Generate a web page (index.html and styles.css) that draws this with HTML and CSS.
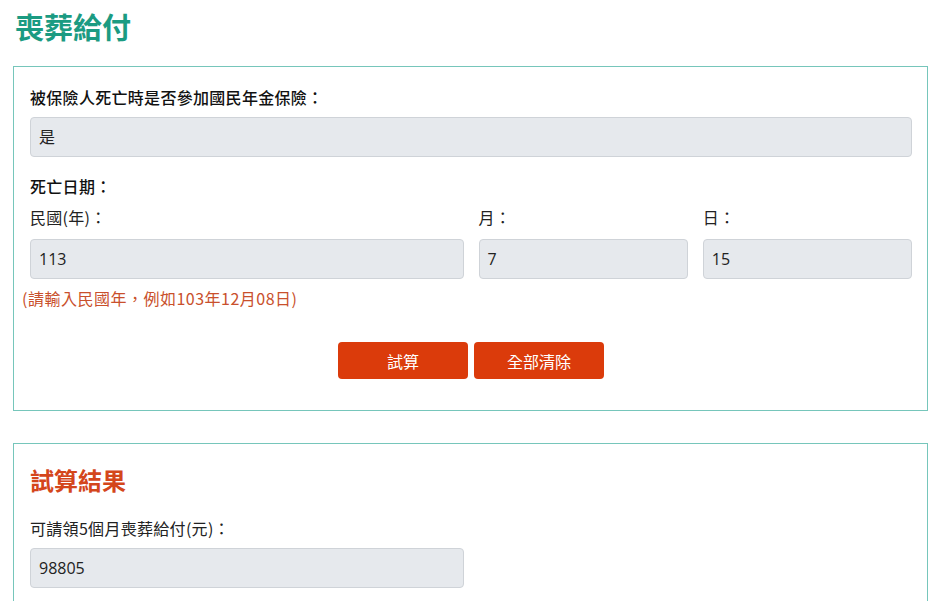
FILE: index.html
```html
<!DOCTYPE html>
<html lang="zh-Hant">
<head>
    <meta charset="UTF-8">
    <meta name="viewport" content="width=device-width, initial-scale=1.0">
    <title>喪葬給付</title>
    <link rel="stylesheet" href="styles.css">
</head>
<body>
    <h1 class="page-title">喪葬給付</h1>

    <div class="card">
        <label class="label strong">被保險人死亡時是否參加國民年金保險：</label>
        <div class="field">是</div>

        <div class="label strong date-title">死亡日期：</div>
        <div class="date-grid">
            <div class="col-year">
                <label class="label">民國(年)：</label>
                <div class="field">113</div>
            </div>
            <div>
                <label class="label">月：</label>
                <div class="field">7</div>
            </div>
            <div>
                <label class="label">日：</label>
                <div class="field">15</div>
            </div>
        </div>
        <p class="hint">(請輸入民國年，例如103年12月08日)</p>

        <div class="actions">
            <button class="btn">試算</button>
            <button class="btn">全部清除</button>
        </div>
    </div>

    <div class="card result">
        <h2 class="result-title">試算結果</h2>
        <label class="label">可請領5個月喪葬給付(元)：</label>
        <div class="date-grid">
            <div class="col-year">
                <div class="field">98805</div>
            </div>
        </div>
    </div>
</body>
</html>
```

FILE: styles.css
```css
body {
    margin: 0;
    padding: 0 13px;
    font-family: "Noto Sans CJK TC", "Noto Sans", sans-serif;
    font-size: 16px;
    color: #222;
    background: #fff;
}

.page-title {
    margin: 0;
    padding: 7px 0 0 2px;
    height: 66px;
    box-sizing: border-box;
    font-size: 29px;
    line-height: 38px;
    font-weight: 700;
    color: #1b9b82;
}

.card {
    border: 1px solid #76c6bb;
    padding: 16px 15px 31px 16px;
}

.label {
    display: block;
    line-height: 28px;
    margin-bottom: 6px;
    letter-spacing: 0.3px;
}
.strong { font-weight: 500; color: #111; }

.field {
    height: 40px;
    box-sizing: border-box;
    padding: 0 8px;
    line-height: 38px;
    background: #e6e9ed;
    border: 1px solid #cfd3d8;
    border-radius: 4px;
    font-family: "Open Sans", "Noto Sans CJK TC", sans-serif;
    font-size: 16px;
    color: #222;
}

.date-title { margin: 15px 0 3px; }

.date-grid {
    display: grid;
    grid-template-columns: repeat(4, 1fr);
    column-gap: 15px;
}
.date-grid .label { margin-bottom: 8px; }
.col-year { grid-column: span 2; }

.hint {
    margin: 5px 0 0 -8px;
    line-height: 28px;
    color: #c9502c;
    font-size: 16px;
    letter-spacing: 0.5px;
}

.actions {
    display: flex;
    justify-content: center;
    gap: 6px;
    margin-top: 30px;
}

.btn {
    width: 130px;
    height: 37px;
    border: none;
    border-radius: 4px;
    background: #db3b0b;
    color: #fff;
    font-family: "Noto Sans CJK TC", sans-serif;
    font-size: 16px;
    cursor: pointer;
}

.result {
    margin-top: 32px;
    padding-bottom: 40px;
}

.result-title {
    margin: 0 0 14px;
    font-size: 24px;
    line-height: 40px;
    font-weight: 700;
    color: #d4461b;
}
```
